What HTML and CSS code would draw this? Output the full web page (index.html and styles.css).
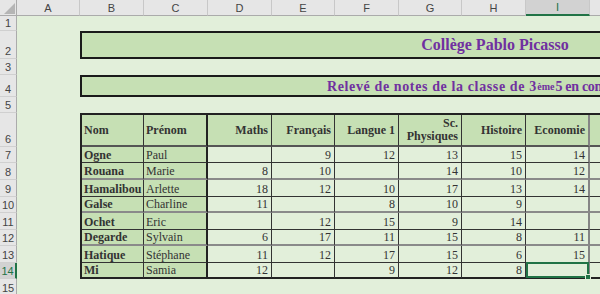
FILE: index.html
```html
<!DOCTYPE html>
<html lang="fr">
<head>
<meta charset="utf-8">
<title>Relevé de notes</title>
<link rel="stylesheet" href="styles.css">
</head>
<body>
<div class="sheet">
  <div class="corner"><svg width="17" height="16" viewBox="0 0 17 16"><polygon points="15,3 15,14 4,14" fill="#b5b5b5"/></svg></div>
  <div class="colhdrs">
    <div class="ch w63">A</div>
    <div class="ch w64">B</div>
    <div class="ch w64">C</div>
    <div class="ch w64">D</div>
    <div class="ch w63">E</div>
    <div class="ch w64">F</div>
    <div class="ch w63">G</div>
    <div class="ch w64">H</div>
    <div class="ch w64 sel">I</div>
    <div class="ch w64"></div>
  </div>
  <div class="rowhdrs">
    <div class="rh h15">1</div>
    <div class="rh h28">2</div>
    <div class="rh h16">3</div>
    <div class="rh h22">4</div>
    <div class="rh h16">5</div>
    <div class="rh h34">6</div>
    <div class="rh h16">7</div>
    <div class="rh h17">8</div>
    <div class="rh h17">9</div>
    <div class="rh h16">10</div>
    <div class="rh h17">11</div>
    <div class="rh h16">12</div>
    <div class="rh h17">13</div>
    <div class="rh h16 sel">14</div>
    <div class="rh h17">15</div>
  </div>
  <div class="cells">
    <div class="band title">Collège Pablo Picasso</div>
    <div class="band subtitle"><span class="spaced">Relevé de notes de la classe de </span>3<sup class="sup">ème</sup><span class="tight">5 en contrôle continu</span></div>
    <div class="table">
      <div class="tr head">
        <div class="c">Nom</div><div class="c">Prénom</div><div class="c">Maths</div><div class="c">Français</div><div class="c">Langue 1</div><div class="c">Sc.<br>Physiques</div><div class="c">Histoire</div><div class="c">Economie</div><div class="c"></div>
      </div>
      <div class="tr">
        <div class="c">Ogne</div><div class="c">Paul</div><div class="c"></div><div class="c">9</div><div class="c">12</div><div class="c">13</div><div class="c">15</div><div class="c">14</div><div class="c"></div>
      </div>
      <div class="tr g">
        <div class="c">Rouana</div><div class="c">Marie</div><div class="c">8</div><div class="c">10</div><div class="c"></div><div class="c">14</div><div class="c">10</div><div class="c">12</div><div class="c"></div>
      </div>
      <div class="tr">
        <div class="c">Hamalibou</div><div class="c">Arlette</div><div class="c">18</div><div class="c">12</div><div class="c">10</div><div class="c">17</div><div class="c">13</div><div class="c">14</div><div class="c"></div>
      </div>
      <div class="tr g">
        <div class="c">Galse</div><div class="c">Charline</div><div class="c">11</div><div class="c"></div><div class="c">8</div><div class="c">10</div><div class="c">9</div><div class="c"></div><div class="c"></div>
      </div>
      <div class="tr">
        <div class="c">Ochet</div><div class="c">Eric</div><div class="c"></div><div class="c">12</div><div class="c">15</div><div class="c">9</div><div class="c">14</div><div class="c"></div><div class="c"></div>
      </div>
      <div class="tr g">
        <div class="c">Degarde</div><div class="c">Sylvain</div><div class="c">6</div><div class="c">17</div><div class="c">11</div><div class="c">15</div><div class="c">8</div><div class="c">11</div><div class="c"></div>
      </div>
      <div class="tr">
        <div class="c">Hatique</div><div class="c">Stéphane</div><div class="c">11</div><div class="c">12</div><div class="c">17</div><div class="c">15</div><div class="c">6</div><div class="c">15</div><div class="c"></div>
      </div>
      <div class="tr last">
        <div class="c">Mi</div><div class="c">Samia</div><div class="c">12</div><div class="c"></div><div class="c">9</div><div class="c">12</div><div class="c">8</div><div class="c selcell"></div><div class="c"></div>
      </div>
    </div>
  </div>
</div>
</body>
</html>
```

FILE: styles.css
```css
html, body {
  margin: 0;
  padding: 0;
  overflow: hidden;
  background: #e2efda;
}

.sheet {
  display: grid;
  grid-template-columns: 17px max-content;
  grid-template-rows: 16px max-content;
  width: max-content;
  font-family: "Liberation Sans", Arial, sans-serif;
}

.corner {
  box-sizing: border-box;
  background: #e6e6e6;
  border-right: 1px solid #ababab;
  border-bottom: 1px solid #ababab;
  line-height: 0;
}

.colhdrs {
  display: flex;
  background: #e6e6e6;
}

.ch {
  box-sizing: border-box;
  height: 16px;
  display: flex;
  align-items: center;
  justify-content: center;
  border-right: 1px solid #c8c8c8;
  border-bottom: 1px solid #ababab;
  font-size: 11px;
  color: #444;
}

.ch.sel {
  background: #d2d2d2;
  border-bottom: 2px solid #217346;
  color: #217346;
}

.w63 { width: 63px; }
.w64 { width: 64px; }

.rowhdrs {
  display: flex;
  flex-direction: column;
  background: #e6e6e6;
}

.rh {
  box-sizing: border-box;
  width: 17px;
  display: flex;
  align-items: flex-end;
  justify-content: center;
  border-right: 1px solid #ababab;
  border-bottom: 1px solid #d0d0d0;
  font-size: 11px;
  line-height: 14px;
  color: #444;
}

.rh.sel {
  background: #d2d2d2;
  border-right: 2px solid #217346;
  color: #217346;
}

.h15 { height: 15px; }
.h16 { height: 16px; }
.h17 { height: 17px; }
.h22 { height: 22px; }
.h28 { height: 28px; }
.h34 { height: 34px; }

.cells {
  display: grid;
  grid-template-columns: 63px 830px;
  grid-template-rows: 15px 28px 16px 22px 16px 166px 17px;
  background: #e2efda;
}

.band {
  grid-column: 2;
  box-sizing: border-box;
  background: #c6e0b4;
  border: 2px solid #1a1a1a;
  display: flex;
  align-items: center;
  font-family: "Liberation Serif", "Times New Roman", serif;
  font-weight: bold;
  color: #7030a0;
  white-space: pre;
}

.title {
  grid-row: 2;
  justify-content: center;
  font-size: 16px;
}

.subtitle {
  grid-row: 4;
  padding-left: 245px;
  font-size: 14px;
  padding-top: 1px;
}

.spaced {
  letter-spacing: 0.62px;
}

.tight {
  letter-spacing: -0.3px;
}

.sup {
  font-size: 10px;
  vertical-align: 5px;
  line-height: 0;
  margin: 0 1px 0 1px;
}

.table {
  grid-column: 2;
  grid-row: 6;
  justify-self: start;
  display: grid;
  grid-template-columns: 62px 64px 64px 63px 64px 63px 64px 64px 64px;
  grid-template-rows: 32px 16px 17px 17px 16px 17px 16px 17px 16px;
  border-left: 2px solid #222;
  border-top: 2px solid #222;
  font-family: "Liberation Serif", "Times New Roman", serif;
  font-size: 12px;
  color: #333;
}

.tr { display: contents; }

.c {
  box-sizing: border-box;
  display: flex;
  align-items: flex-end;
  justify-content: flex-end;
  padding: 0 3px 0 2px;
  line-height: 14px;
  background: #e2efda;
  border-right: 1px solid #333;
  border-bottom: 1px solid #333;
  white-space: nowrap;
}

.tr > .c:nth-child(1),
.tr > .c:nth-child(2) {
  justify-content: flex-start;
  background: #c6e0b4;
}

.tr > .c:nth-child(1) { font-weight: bold; }

.tr > .c:nth-child(2) { border-right: 2px solid #222; }
.tr > .c:nth-child(8) { border-right: 2px solid #858585; }

.tr.head > .c {
  background: #c6e0b4;
  font-weight: bold;
  align-items: center;
  text-align: right;
  line-height: 13px;
  border-bottom: 2px solid #555;
}

.tr.g > .c { border-bottom: 2px solid #8a8a8a; }
.tr.last > .c { border-bottom: 2px solid #222; }

.selcell {
  position: relative;
  z-index: 1;
}

.selcell::after {
  content: "";
  position: absolute;
  top: -1px;
  left: 0;
  right: -1px;
  bottom: -1px;
  border: 2px solid #217346;
}

.selcell::before {
  content: "";
  position: absolute;
  right: -3px;
  bottom: -3px;
  width: 4px;
  height: 4px;
  background: #217346;
  border: 1px solid #e2efda;
  z-index: 2;
}
```
